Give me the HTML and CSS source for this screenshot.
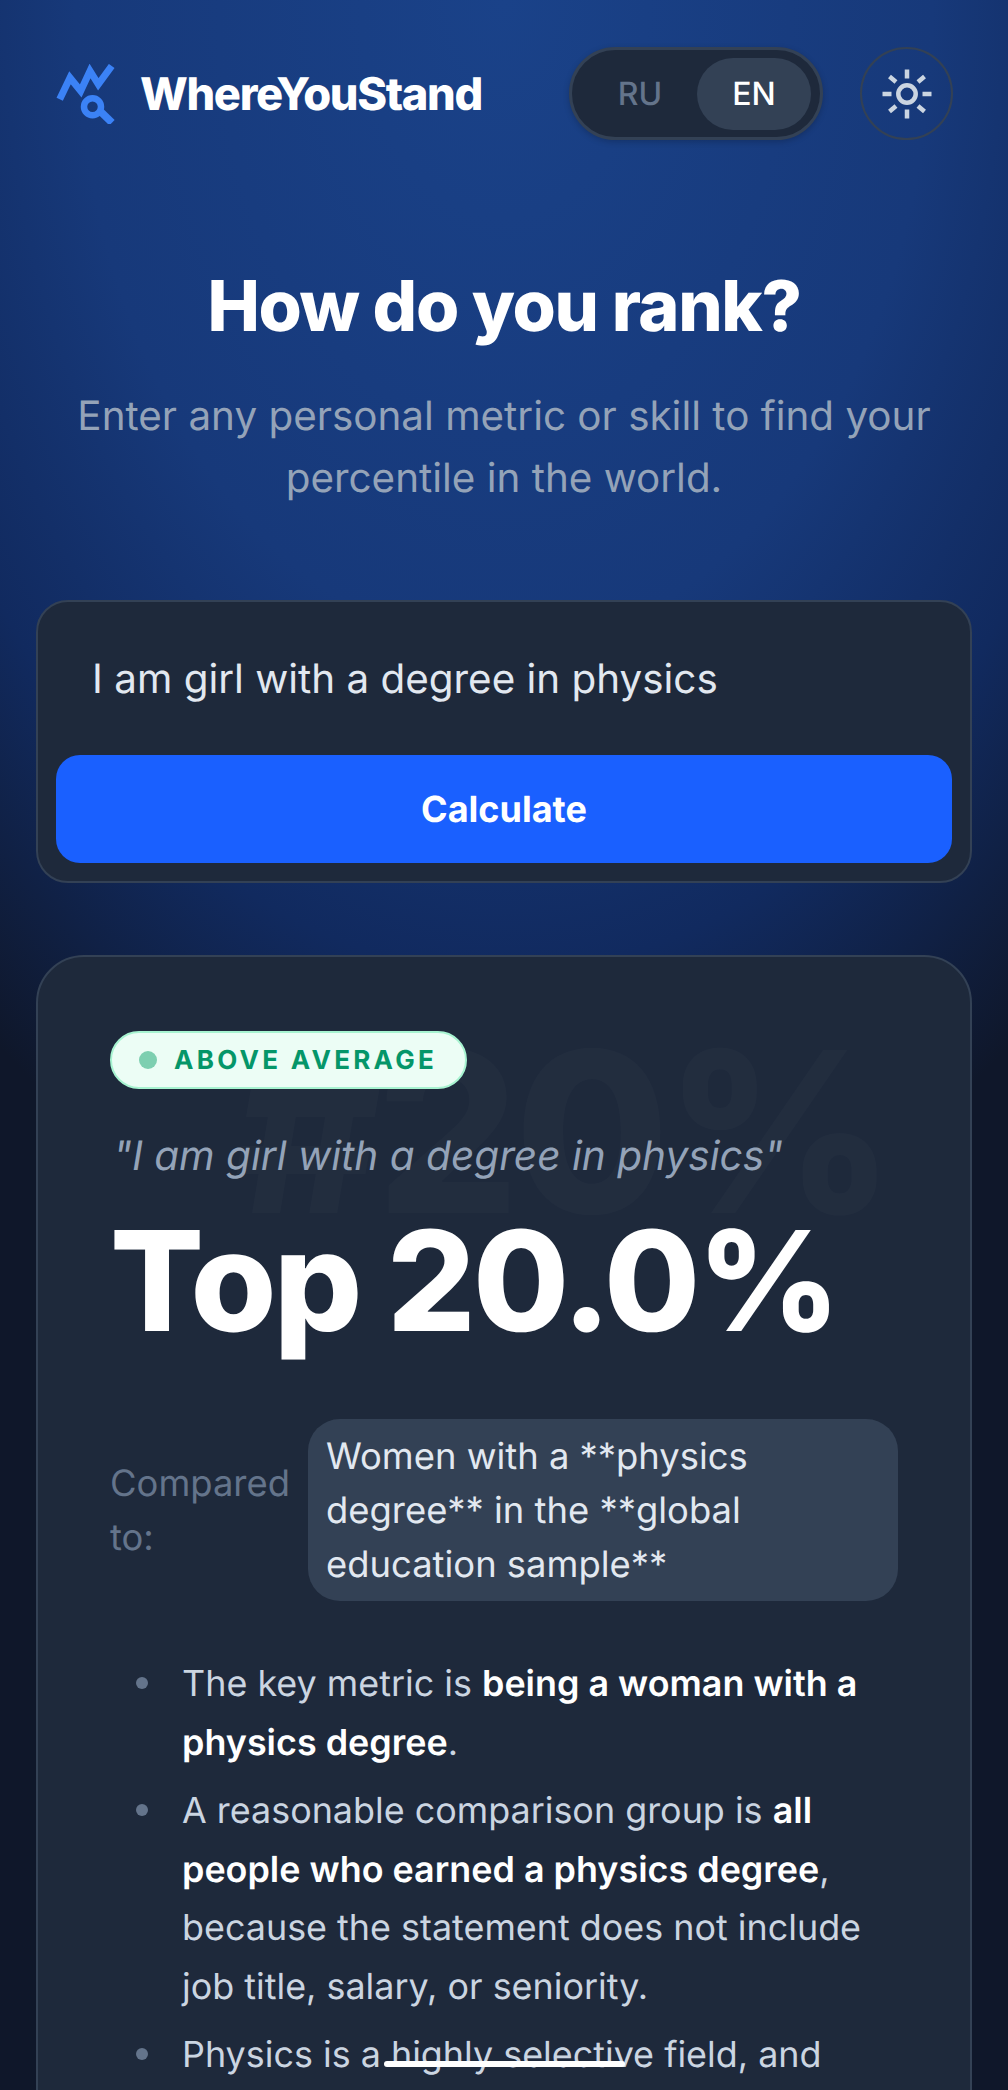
FILE: index.html
```html
<!DOCTYPE html>
<html lang="en">
<head>
<meta charset="UTF-8">
<meta name="viewport" content="width=device-width, initial-scale=1.0">
<title>WhereYouStand</title>
<link rel="stylesheet" href="styles.css">
</head>
<body>

<header class="topbar">
    <div class="brand">
        <svg class="brand-icon" viewBox="0 0 60 60" width="60" height="60">
            <polyline points="3.700,35.300 14,13.700 24.700,27 34,7 42.300,20.300 55.700,2" fill="none" stroke="#3b82f6" stroke-width="7"/>
            <circle cx="36.500" cy="42.700" r="8.500" fill="none" stroke="#3b82f6" stroke-width="6.500"/>
            <line x1="44" y1="47" x2="56" y2="58.700" stroke="#3b82f6" stroke-width="7.500"/>
        </svg>
        <span class="brand-name">WhereYouStand</span>
    </div>
    <div class="controls">
        <div class="lang-switch">
            <span class="lang">RU</span>
            <span class="lang lang-active">EN</span>
        </div>
        <button type="button" class="theme-btn" aria-label="Theme">
            <svg viewBox="0 0 52 52" width="52" height="52" fill="none" stroke="#cbd5e1" stroke-width="4.5">
                <circle cx="26" cy="26" r="8.7"/>
                <path d="M26 1.500V10.500M26 41.500V50.500M1.500 26H10.500M41.500 26H50.500M8.500 8.500L15 14M37 38L43.500 43.500M8.500 43.500L15 38M37 14L43.500 8.500"/>
            </svg>
        </button>
    </div>
</header>

<main class="page">
    <section class="hero">
        <h1>How do you rank?</h1>
        <p>Enter any personal metric or skill to find your percentile in the world.</p>
    </section>

    <form class="search-card">
        <input type="text" class="search-input" value="I am girl with a degree in physics">
        <button type="button" class="search-btn">Calculate</button>
    </form>

    <section class="result-card">
        <div class="watermark">#20%</div>
        <div class="badge"><span class="badge-dot"></span>ABOVE AVERAGE</div>
        <p class="query">"I am girl with a degree in physics"</p>
        <div class="score">Top 20.0%</div>
        <div class="compare">
            <span class="compare-label">Compared to:</span>
            <span class="compare-value">Women with a **physics degree** in the **global education sample**</span>
        </div>
        <ul class="notes">
            <li>The key metric is <strong>being a woman with a physics degree</strong>.</li>
            <li>A reasonable comparison group is <strong>all people who earned a physics degree</strong>, because the statement does not include job title, salary, or seniority.</li>
            <li>Physics is a highly selective field, and</li>
        </ul>
    </section>
</main>

<div class="home-bar"></div>

</body>
</html>
```

FILE: styles.css
```css
html, body {
    margin: 0;
    padding: 0;
    height: 2090px;
    overflow: hidden;
}

body {
    position: relative;
    font-family: Inter, "Liberation Sans", sans-serif;
    text-rendering: geometricPrecision;
    color: #fff;
    background-color: #0f172a;
    background-image: radial-gradient(ellipse 85% 62% at 50% 0%, #1a4289 0%, #17397a 50%, #112a5f 75%, #0f172a 100%);
}

.topbar {
    display: flex;
    align-items: center;
    justify-content: space-between;
    padding: 47px 55px 0 56px;
}

.brand {
    display: flex;
    align-items: center;
    gap: 24px;
}

.brand-icon {
    display: block;
}

.brand-name {
    font-size: 45.2px;
    font-weight: 800;
    letter-spacing: -1.35px;
}

.controls {
    display: flex;
    align-items: center;
    gap: 37px;
}

.lang-switch {
    display: flex;
    align-items: center;
    box-sizing: border-box;
    width: 254px;
    height: 93px;
    padding: 0 9px 0 11px;
    justify-content: space-between;
    background: #1e293b;
    border: 3px solid #334155;
    border-radius: 47px;
    box-shadow: 0 2px 6px rgba(0, 0, 0, 0.2);
}

.lang {
    display: block;
    width: 114px;
    height: 72px;
    line-height: 72px;
    text-align: center;
    font-size: 32px;
    font-weight: 500;
    color: #64748b;
    border-radius: 36px;
}

.lang-active {
    background: #334155;
    color: #fff;
}

.theme-btn {
    display: flex;
    align-items: center;
    justify-content: center;
    box-sizing: border-box;
    width: 93px;
    height: 93px;
    padding: 0;
    background: none;
    border: 2px solid #334155;
    border-radius: 50%;
}

.page {
    padding: 0 36px;
}

.hero {
    margin-top: 127px;
    text-align: center;
}

.hero h1 {
    margin: 0;
    font-size: 70px;
    line-height: 78px;
    font-weight: 800;
    letter-spacing: -1.35px;
}

.hero p {
    margin: 40px 0 0;
    padding: 0 20px;
    font-size: 40.4px;
    line-height: 62px;
    color: #94a3b8;
}

.search-card {
    box-sizing: border-box;
    height: 283px;
    margin-top: 91px;
    padding: 18px 18px;
    background: #1e293b;
    border: 2px solid #334155;
    border-radius: 32px;
}

.search-input {
    display: block;
    box-sizing: border-box;
    width: 100%;
    height: 135px;
    padding: 0 36px 19px;
    background: none;
    border: none;
    outline: none;
    font-family: inherit;
    font-size: 40.4px;
    color: #e2e8f0;
    text-rendering: geometricPrecision;
}

.search-btn {
    display: block;
    width: 100%;
    height: 108px;
    background: #1a60ff;
    border: none;
    border-radius: 24px;
    font-family: inherit;
    font-size: 36px;
    font-weight: 700;
    color: #fff;
    text-rendering: geometricPrecision;
}

.result-card {
    position: relative;
    box-sizing: border-box;
    height: 1200px;
    margin-top: 72px;
    padding: 74px 72px 0;
    overflow: hidden;
    background: #1e293b;
    border: 2px solid #334155;
    border-radius: 48px;
}

.watermark {
    position: absolute;
    top: 64px;
    right: 80px;
    font-size: 224px;
    line-height: 1;
    font-weight: 800;
    letter-spacing: -5px;
    color: rgba(255, 255, 255, 0.02);
}

.badge {
    position: relative;
    display: inline-flex;
    align-items: center;
    gap: 17px;
    box-sizing: border-box;
    height: 58px;
    padding: 0 28px 0 27px;
    background: #ecfdf5;
    border: 2px solid #a7f3d0;
    border-radius: 29px;
    font-size: 26px;
    font-weight: 700;
    letter-spacing: 3.3px;
    color: #059669;
}

.badge-dot {
    width: 18px;
    height: 18px;
    border-radius: 50%;
    background: #7dcfb0;
}

.query {
    position: relative;
    margin: 41px 0 0 3px;
    font-size: 40.6px;
    line-height: 52px;
    font-style: italic;
    color: #94a3b8;
}

.score {
    position: relative;
    margin-top: 24px;
    font-size: 139px;
    line-height: 150px;
    font-weight: 800;
    letter-spacing: -2.8px;
}

.compare {
    position: relative;
    display: flex;
    align-items: center;
    gap: 18px;
    margin-top: 63px;
}

.compare-label {
    flex: none;
    width: 180px;
    font-size: 36.4px;
    line-height: 54px;
    color: #64748b;
}

.compare-value {
    box-sizing: border-box;
    flex: 1;
    padding: 10px 18px;
    background: #334155;
    border-radius: 32px;
    font-size: 36.4px;
    line-height: 54px;
    color: #e2e8f0;
}

.notes {
    position: relative;
    list-style: none;
    margin: 53px 0 0;
    padding: 0 0 0 72px;
    font-size: 35.9px;
    line-height: 58.5px;
    color: #cbd5e1;
}

.notes li {
    position: relative;
    margin-bottom: 10px;
}

.notes li::before {
    content: "";
    position: absolute;
    left: -46px;
    top: 23px;
    width: 12px;
    height: 12px;
    border-radius: 50%;
    background: #64748b;
}

.notes strong {
    font-weight: 600;
    color: #fff;
}

.home-bar {
    position: absolute;
    left: 384px;
    bottom: 23px;
    width: 241px;
    height: 6px;
    border-radius: 3px;
    background: #fff;
}
```
